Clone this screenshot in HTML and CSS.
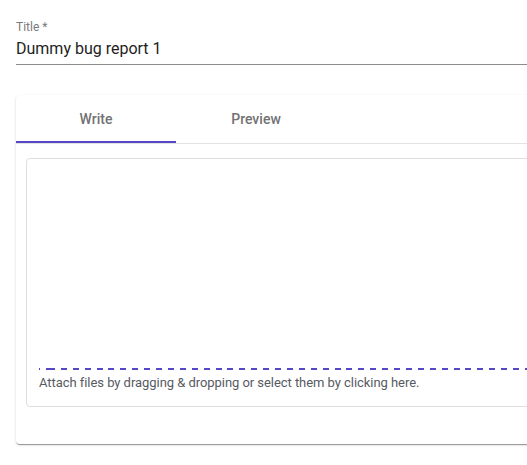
FILE: index.html
```html
<!DOCTYPE html>
<html>
<head>
<meta charset="utf-8">
<link rel="stylesheet" href="styles.css">
</head>
<body>
<div class="page">
  <div class="field">
    <div class="field-label">Title *</div>
    <div class="field-input">Dummy bug report 1</div>
  </div>
  <div class="card">
    <div class="tabs">
      <div class="tab tab-active">Write</div>
      <div class="tab">Preview</div>
    </div>
    <div class="editor">
      <div class="editor-box">
        <div class="editor-text"></div>
        <div class="dropzone-line"></div>
        <div class="dropzone-hint">Attach files by dragging &amp; dropping or select them by clicking here.</div>
      </div>
    </div>
  </div>
</div>
</body>
</html>
```

FILE: styles.css
```css
html, body {
  margin: 0;
  padding: 0;
  overflow: hidden;
  background: #ffffff;
}

body {
  font-family: Roboto, "Liberation Sans", Arial, sans-serif;
  color: #222222;
}

.page {
  width: 527px;
  height: 465px;
  overflow: hidden;
  box-sizing: border-box;
  padding: 19px 0 0 16px;
}

.field {
  margin-right: -20px;
}

.field-label {
  font-size: 12px;
  line-height: 16px;
  color: #7a7a7a;
}

.field-input {
  margin-top: 2px;
  font-size: 16px;
  line-height: 24px;
  padding-bottom: 3px;
  border-bottom: 1px solid #8c8c8c;
  color: #1e1e1e;
}

.card {
  margin-top: 30px;
  margin-right: -40px;
  background: #ffffff;
  border-radius: 4px;
  box-shadow: 0 2px 1px -1px rgba(0,0,0,0.25), 0 1px 1px 0 rgba(0,0,0,0.16), 0 1px 3px 0 rgba(0,0,0,0.12);
  padding-bottom: 37px;
}

.tabs {
  display: flex;
  border-bottom: 1px solid #e3e3e3;
}

.tab {
  width: 160px;
  height: 48px;
  box-sizing: border-box;
  display: flex;
  align-items: center;
  justify-content: center;
  font-size: 14px;
  font-weight: 500;
  color: #727272;
  border-bottom: 2px solid transparent;
  padding-top: 2px;
}

.tab-active {
  border-bottom-color: #5548c4;
}

.editor {
  padding: 14px 0 0 10px;
}

.editor-box {
  border: 1px solid #dedede;
  border-radius: 4px;
  padding: 0 0 14px 12px;
}

.editor-text {
  height: 209px;
}

.dropzone-line {
  height: 2px;
  background-image: repeating-linear-gradient(90deg, #5548c4 0 6px, transparent 6px 11.9px);
  background-position: 10px 0;
}

.dropzone-hint {
  margin-top: 4px;
  font-size: 13px;
  line-height: 18px;
  letter-spacing: -0.05px;
  color: #575a62;
}
```
